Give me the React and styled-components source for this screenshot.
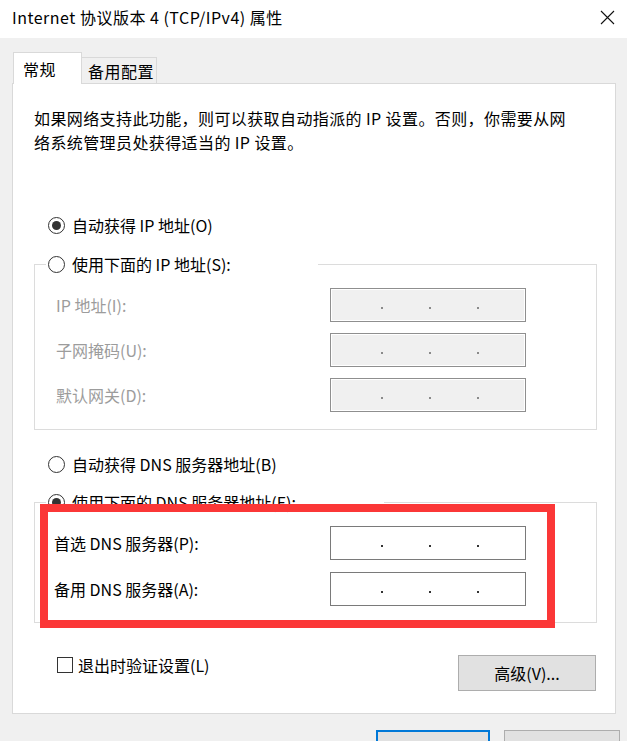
import styled, { createGlobalStyle } from 'styled-components';

const GlobalStyle = createGlobalStyle`
  body {
    margin: 0;
    font-family: "Noto Sans CJK SC", "Microsoft YaHei", sans-serif;
    font-size: 16px;
    color: #000;
  }
  * { box-sizing: border-box; }
`;

const Window = styled.div`
  width: 627px;
  height: 741px;
  overflow: hidden;
  background: #f0f0f0;
  display: flex;
  flex-direction: column;
`;

const TitleBar = styled.div`
  height: 38px;
  flex: none;
  background: #fff;
  display: flex;
  align-items: center;
  justify-content: space-between;
  padding: 0 12px 4px 12px;
`;

const Title = styled.div`
  font-size: 16px;
  line-height: 22px;
  letter-spacing: 0.5px;
  color: #000;
`;

const Main = styled.div`
  padding: 14px 0 0 12px;
`;

const Tabs = styled.div`
  display: flex;
  align-items: flex-end;
  margin-left: 1px;
  margin-bottom: -1px;
  position: relative;
  z-index: 1;
`;

const Tab = styled.div`
  height: ${p => (p.$active ? 32 : 27)}px;
  width: ${p => p.$w}px;
  padding-left: ${p => (p.$active ? 9 : 6)}px;
  background: ${p => (p.$active ? '#fff' : '#f0f0f0')};
  border: 1px solid #d9d9d9;
  border-bottom: ${p => (p.$active ? 'none' : '1px solid #d9d9d9')};
  border-left: ${p => (p.$first ? '1px solid #d9d9d9' : 'none')};
  display: flex;
  align-items: center;
  line-height: 24px;
  letter-spacing: 0.5px;
`;

const Panel = styled.div`
  position: relative;
  width: 604px;
  background: #fff;
  border: 1px solid #d9d9d9;
  padding: 22px 0 22px 0;
`;

const Description = styled.p`
  margin: 0;
  padding: 0 10px 0 21px;
  line-height: 24px;
  letter-spacing: 0.4px;
`;

const RadioRow = styled.label`
  display: flex;
  align-items: center;
  gap: 7px;
  height: 24px;
  line-height: 24px;
  margin: ${p => p.$mt}px 0 0 35px;
`;

const Radio = styled.span`
  width: 17px;
  height: 17px;
  flex: none;
  border-radius: 50%;
  border: 1px solid #333;
  display: flex;
  align-items: center;
  justify-content: center;
  &::after {
    content: '';
    width: 9px;
    height: 9px;
    border-radius: 50%;
    background: ${p => (p.$checked ? '#333' : 'transparent')};
  }
`;

const Group = styled.fieldset`
  margin: ${p => p.$mt}px 18px 0 21px;
  padding: 12px 0 ${p => p.$pb}px 11px;
  border: 1px solid #dcdcdc;
  min-width: 0;
`;

const Legend = styled.legend`
  width: ${p => p.$w}px;
  height: 24px;
  padding: 0 0 0 2px;
  display: flex;
  align-items: center;
  gap: 7px;
  line-height: 24px;
`;

const FieldGrid = styled.div`
  display: grid;
  grid-template-columns: ${p => p.$labelWidth}px 196px;
  row-gap: ${p => p.$gap}px;
  align-items: center;
  padding-left: ${p => p.$indent}px;
`;

const FieldLabel = styled.span`
  color: ${p => (p.$disabled ? '#9c9c9c' : '#000')};
  line-height: 24px;
`;

const IpBox = styled.div`
  height: 34px;
  border: 1px solid ${p => (p.$disabled ? '#8f8f8f' : '#7a7a7a')};
  background: ${p => (p.$disabled ? '#f0f0f0' : '#fff')};
  box-shadow: ${p => (p.$disabled ? 'inset 0 0 0 1px #fff' : 'none')};
  display: flex;
  align-items: center;
  justify-content: space-evenly;
  padding-left: 4px;
`;

const Dot = styled.span`
  width: 2px;
  height: 2px;
  margin-top: 5px;
  background: ${p => (p.$disabled ? '#8a8a8a' : '#333')};
`;

const Highlight = styled.div`
  position: absolute;
  left: 27px;
  top: 420px;
  width: 515px;
  height: 124px;
  border: 8px solid #fb3737;
  pointer-events: none;
`;

const Footer = styled.div`
  display: flex;
  justify-content: space-between;
  align-items: flex-start;
  margin-top: 30px;
  padding: 0 19px 0 44px;
`;

const CheckRow = styled.label`
  display: flex;
  align-items: center;
  gap: 5px;
  height: 24px;
  line-height: 24px;
`;

const CheckBox = styled.span`
  width: 16px;
  height: 16px;
  border: 1px solid #333;
  background: #fff;
`;

const Button = styled.button`
  width: ${p => p.$w}px;
  height: 36px;
  margin-top: ${p => p.$mt || 0}px;
  font-family: inherit;
  font-size: 16px;
  color: #000;
  background: #e1e1e1;
  border: ${p => (p.$default ? '2px solid #0078d7' : '1px solid #adadad')};
  padding: 0;
`;

const ButtonRow = styled.div`
  display: flex;
  justify-content: flex-end;
  gap: 14px;
  margin-top: 16px;
  padding-right: 7px;
`;

const CloseIcon = () => (
  <svg width="15" height="15" viewBox="0 0 15 15">
    <path d="M1 1 L14 14 M14 1 L1 14" stroke="#111" strokeWidth="1.1" fill="none" />
  </svg>
);

const IpField = ({ disabled }) => (
  <IpBox $disabled={disabled}>
    <Dot $disabled={disabled} />
    <Dot $disabled={disabled} />
    <Dot $disabled={disabled} />
  </IpBox>
);

const ipRows = ['IP 地址(I):', '子网掩码(U):', '默认网关(D):'];
const dnsRows = ['首选 DNS 服务器(P):', '备用 DNS 服务器(A):'];

export default function App() {
  return (
    <>
      <GlobalStyle />
      <Window>
        <TitleBar>
          <Title>Internet 协议版本 4 (TCP/IPv4) 属性</Title>
          <CloseIcon />
        </TitleBar>
        <Main>
          <Tabs>
            <Tab $active $first $w={69}>常规</Tab>
            <Tab $w={75}>备用配置</Tab>
          </Tabs>
          <Panel>
            <Description>
              如果网络支持此功能，则可以获取自动指派的 IP 设置。否则，你需要从网
              <br />
              络系统管理员处获得适当的 IP 设置。
            </Description>

            <RadioRow $mt={59}>
              <Radio $checked />
              自动获得 IP 地址(O)
            </RadioRow>

            <Group $mt={15} $pb={17}>
              <Legend $w={272}>
                <Radio />
                使用下面的 IP 地址(S):
              </Legend>
              <FieldGrid $labelWidth={274} $gap={11} $indent={10}>
                {ipRows.map(l => (
                  <>
                    <FieldLabel key={l} $disabled>{l}</FieldLabel>
                    <IpField disabled />
                  </>
                ))}
              </FieldGrid>
            </Group>

            <RadioRow $mt={22}>
              <Radio />
              自动获得 DNS 服务器地址(B)
            </RadioRow>

            <Group $mt={14} $pb={16}>
              <Legend $w={338}>
                <Radio $checked />
                使用下面的 DNS 服务器地址(E):
              </Legend>
              <FieldGrid $labelWidth={276} $gap={12} $indent={8}>
                {dnsRows.map(l => (
                  <>
                    <FieldLabel key={l}>{l}</FieldLabel>
                    <IpField />
                  </>
                ))}
              </FieldGrid>
            </Group>

            <Footer>
              <CheckRow>
                <CheckBox />
                退出时验证设置(L)
              </CheckRow>
              <Button $w={138} $mt={2}>高级(V)...</Button>
            </Footer>

            <Highlight />
          </Panel>
          <ButtonRow>
            <Button $w={114} $default>确定</Button>
            <Button $w={116}>取消</Button>
          </ButtonRow>
        </Main>
      </Window>
    </>
  );
}
